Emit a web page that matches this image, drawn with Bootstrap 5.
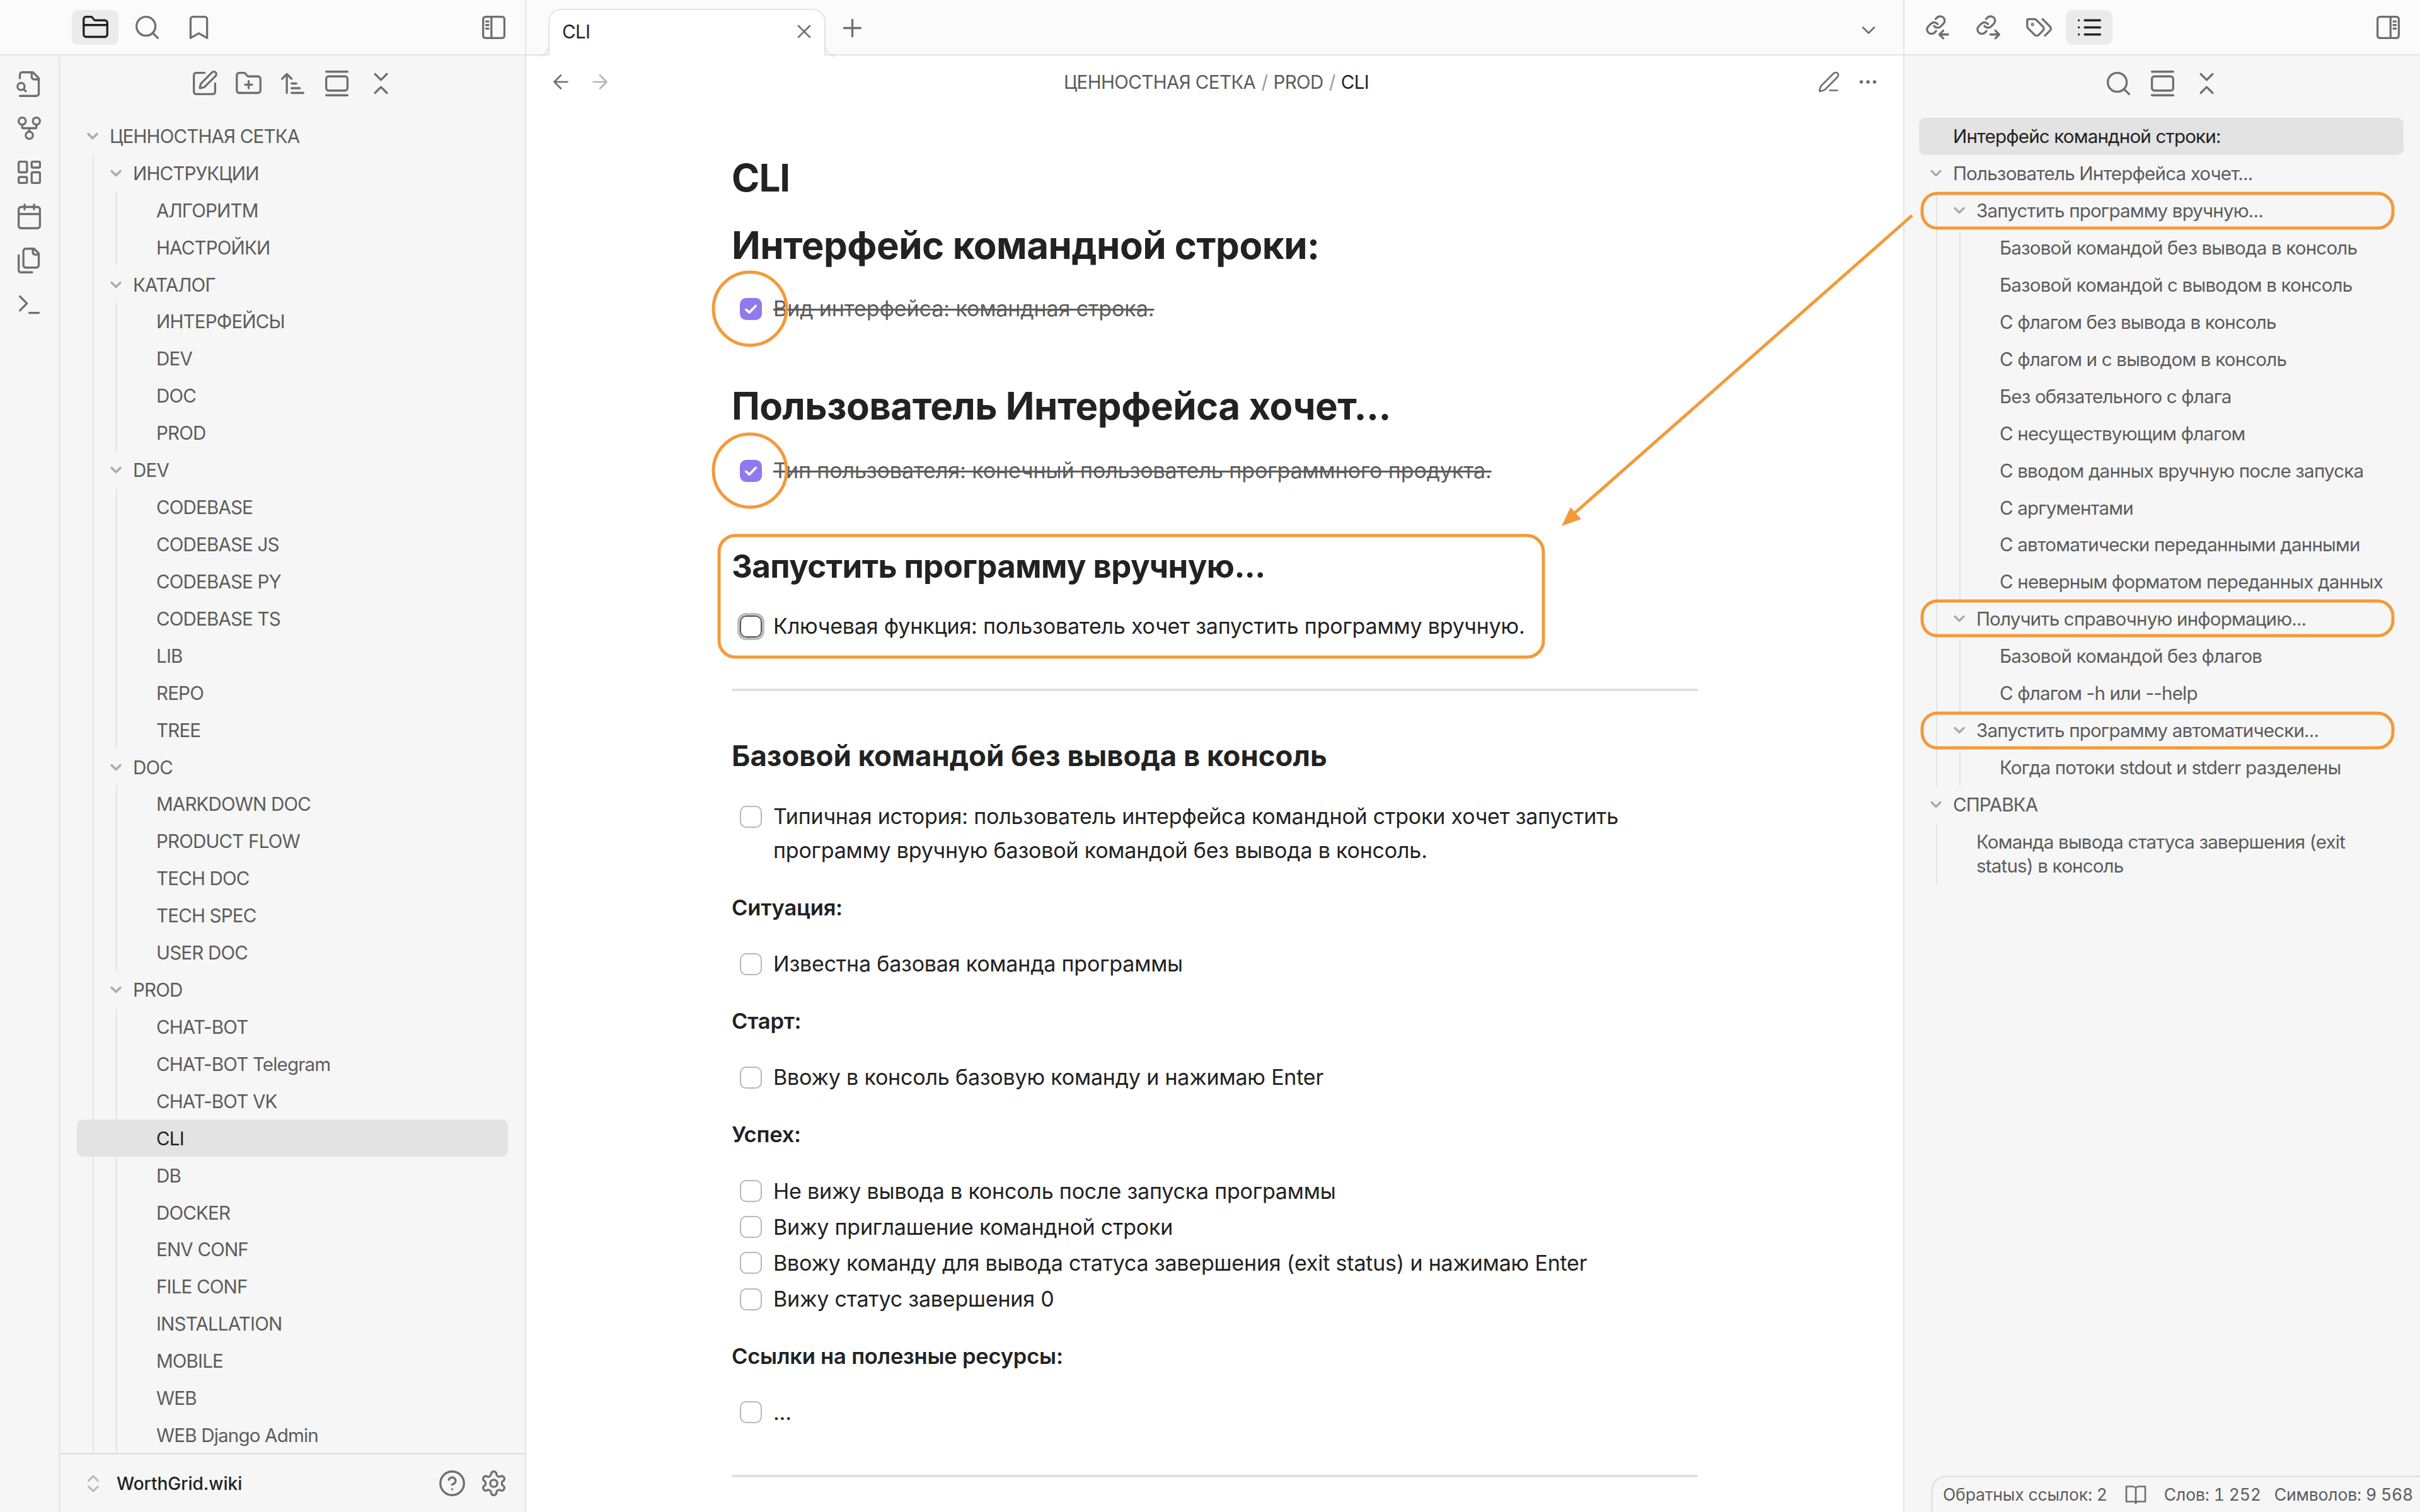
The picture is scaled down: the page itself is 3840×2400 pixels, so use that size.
<!doctype html>
<html lang="ru"><head><meta charset="utf-8"><title>CLI</title>
<link href="https://cdn.jsdelivr.net/npm/bootstrap@5.3.0/dist/css/bootstrap.min.css" rel="stylesheet">
<style>
:root{--line:#e3e3e3;--soft:#f6f6f6;--bar:#fbfbfb;--txt:#5c5c5c;--dark:#222;--ico:#6f6f6f;--org:#f39a38}
html,body{height:2400px;width:3840px;overflow:hidden}
body{font-family:Inter,"Noto Sans",sans-serif;color:var(--dark);background:#fff;position:relative}
svg.ic{fill:none;stroke:currentColor;stroke-width:1.75;stroke-linecap:round;stroke-linejoin:round;display:block}
.i45{width:45px;height:45px}.i36{width:36px;height:36px}.i28{width:28px;height:28px}
.app-left{width:835px;border-right:2px solid var(--line);flex:none}
.pane-body{min-height:0}
.app-main{flex:1 1 0;min-width:0}
.app-right{width:820px;border-left:2px solid var(--line);flex:none;background:var(--soft)}
.topbar{height:88px;background:var(--bar);border-bottom:2px solid var(--line);flex:none}
.top-left{padding:0 13px 0 114px}
.top-right{padding:0 14px 0 0}
.top-group{margin-left:16px;gap:6px}
.tb-btn{width:74px;height:55px;border-radius:10px;color:var(--ico);flex:none}
.tb-btn.on{background:#ebebeb;color:#222}
.ribbon{width:95px;background:var(--soft);border-right:2px solid var(--line);flex:none;padding-top:10px}
.rib-btn{height:70px;color:var(--ico)}
.tree-col{background:var(--soft);min-width:0}
.tool-row{height:88px;flex:none;color:var(--ico)}
.tool-btn{width:70px}
.tree{padding:10.5px 27px 0 25px;font-size:29.5px;letter-spacing:-.8px;color:var(--txt);overflow:hidden;min-height:0}
.ol{padding:11px 26px 0 23px;font-size:29.5px;letter-spacing:-.8px;color:var(--txt)}
.tr{height:58.93px;white-space:nowrap}
.tr-multi{height:auto;white-space:normal;line-height:38px;padding:10px 0}
.chev{width:54px;flex:none;color:#ababab}
.chev svg{stroke-width:3}
.kids{margin-left:27px;border-left:2px solid var(--line);padding-left:8px}
.tr.sel{background:#e3e3e3;color:#222;border-radius:10px}
.tr.deep{margin-left:-72px;padding-left:72px}
.ft{height:94px;border-top:3px solid var(--line);flex:none;padding:0 27px 0 35px}
.ft-name{font-size:28px;font-weight:500;color:#222;margin-left:19px}
.ft-gear{margin-left:21px}
.tabbar{height:88px;background:var(--bar);border-bottom:2px solid var(--line);flex:none;padding-left:35px}
.tabx{width:440px;height:74px;margin-top:14px;background:#fff;border:2px solid var(--line);border-bottom:0;border-radius:20px 20px 0 0;padding:0 14px 4px 20px;font-size:29.5px;letter-spacing:-.6px;color:#222;position:relative}
.tabx::before,.tabx::after{content:"";position:absolute;bottom:-2px;width:14px;height:14px;border-bottom:2px solid var(--line)}
.tabx::before{left:-16px;border-right:2px solid var(--line);border-bottom-right-radius:14px}
.tabx::after{right:-16px;border-left:2px solid var(--line);border-bottom-left-radius:14px}
.tab-plus{margin:22px 0 0 20px}
.tab-menu{margin:30px 37px 0 0}
.ic-g{color:var(--ico)}
.viewhead{height:84px;flex:none;padding:0 38px 0 37px;font-size:29.5px;letter-spacing:-.6px;color:var(--txt)}
.vh-side{width:150px;gap:26px}
.crumbs{padding-left:6px}
.muted-ic{color:#b5b5b5}
.crumb-sep{margin:0 9px;color:#9a9a9a}
.crumb-now{color:#222}
.doc{width:1533px;margin:0 auto;font-size:34px;letter-spacing:-.2px;line-height:54px}
.doc h1,.doc h2,.doc h3,.doc h4{font-weight:700;color:#222;margin-bottom:0}
.d1{font-size:60px;line-height:72px;margin-top:74px!important;letter-spacing:-1px}
.d2{font-size:60px;line-height:72px;letter-spacing:-.5px}
.d3{font-size:51px;line-height:62px;letter-spacing:-.6px}
.d4{font-size:45.5px;line-height:56px;letter-spacing:0}
.lab{font-weight:600;font-size:34.5px;line-height:54px;margin-top:35px}
.rowc{padding:2px 0;gap:18px;padding-left:13px}
.rowc.tight{padding-top:1.6px;padding-bottom:1.6px}
.rowc .form-check-input{width:35px;height:35px;margin:9.5px 0 0;flex:none;border:2.5px solid #b8b8b8;border-radius:10px;background-color:#fff;opacity:1}
.rowc .form-check-input:checked{background-color:#9079ee;border-color:#9079ee;background-size:100%;background-image:url("data:image/svg+xml,%3csvg xmlns='http://www.w3.org/2000/svg' viewBox='0 0 20 20'%3e%3cpath fill='none' stroke='%23fff' stroke-linecap='round' stroke-linejoin='round' stroke-width='2.4' d='M5 10.6l3.4 3L15 6.8'/%3e%3c/svg%3e")}
.rowc .form-check-input.foc{border-color:#555;outline:4px solid #bdbdbd;outline-offset:0}
.done{text-decoration:line-through;text-decoration-thickness:3px;color:var(--txt);letter-spacing:-.1px}
.rule{height:4px;background:#e0e0e0;border:0;opacity:1;margin:0}
.m36{margin-top:36px}.m34{margin-top:34px}.m38{margin-top:38px}.m35{margin-top:35px}.m33{margin-top:33px}.m89{margin-top:89px}.m92{margin-top:92px}.m70{margin-top:70px!important}.m75{margin-top:75px}.m39{margin-top:39px}
.stat{position:absolute;right:0;bottom:0;left:3064px;height:58px;background:var(--soft);border-top:3px solid var(--line);border-left:3px solid var(--line);border-top-left-radius:24px;padding-left:16px;font-size:26.5px;letter-spacing:-.15px;color:var(--txt);gap:21px;white-space:nowrap;font-variant-numeric:tabular-nums}
.stat svg{margin:0 6px}
.overlay{position:absolute;left:0;top:0;width:3840px;height:2400px;pointer-events:none}
</style></head>
<body class="d-flex">
<svg width="0" height="0" class="position-absolute"><defs>
<symbol id="folder" viewBox="0 0 24 24"><path d="M20 20a2 2 0 0 0 2-2V8a2 2 0 0 0-2-2h-7.9a2 2 0 0 1-1.69-.9L9.6 3.9A2 2 0 0 0 7.93 3H4a2 2 0 0 0-2 2v13a2 2 0 0 0 2 2Z"/><path d="M2 10h20"/></symbol>
<symbol id="search" viewBox="0 0 24 24"><circle cx="11" cy="11" r="8"/><path d="m21 21-4.3-4.3"/></symbol>
<symbol id="bookmark" viewBox="0 0 24 24"><path d="m19 21-7-4-7 4V5a2 2 0 0 1 2-2h10a2 2 0 0 1 2 2v16z"/></symbol>
<symbol id="sideL" viewBox="0 0 24 24"><rect x="3" y="3" width="18" height="18" rx="2"/><path d="M10 3v18M5.5 7h2M5.5 10h2M5.5 13h2"/></symbol>
<symbol id="sideR" viewBox="0 0 24 24"><rect x="3" y="3" width="18" height="18" rx="2"/><path d="M14 3v18M16.5 7h2M16.5 10h2M16.5 13h2"/></symbol>
<symbol id="filesearch" viewBox="0 0 24 24"><path d="M4 22h14a2 2 0 0 0 2-2V7l-5-5H6a2 2 0 0 0-2 2v3"/><path d="M14 2v4a2 2 0 0 0 2 2h4"/><path d="M5 17a3 3 0 1 0 0-6 3 3 0 0 0 0 6z"/><path d="m9 18-1.5-1.5"/></symbol>
<symbol id="fork" viewBox="0 0 24 24"><circle cx="12" cy="18" r="3"/><circle cx="6" cy="6" r="3"/><circle cx="18" cy="6" r="3"/><path d="M18 9v2c0 .6-.4 1-1 1H7c-.6 0-1-.4-1-1V9"/><path d="M12 12v3"/></symbol>
<symbol id="dash" viewBox="0 0 24 24"><rect x="3" y="3" width="7" height="9" rx="1"/><rect x="14" y="3" width="7" height="5" rx="1"/><rect x="14" y="12" width="7" height="9" rx="1"/><rect x="3" y="16" width="7" height="5" rx="1"/></symbol>
<symbol id="cal" viewBox="0 0 24 24"><rect x="3" y="4" width="18" height="18" rx="2"/><path d="M16 2v4M8 2v4M3 10h18"/></symbol>
<symbol id="files" viewBox="0 0 24 24"><path d="M20 7h-3a2 2 0 0 1-2-2V2"/><path d="M9 18a2 2 0 0 1-2-2V4a2 2 0 0 1 2-2h7l4 4v10a2 2 0 0 1-2 2Z"/><path d="M3 7.6v12.8A1.6 1.6 0 0 0 4.6 22h9.8"/></symbol>
<symbol id="term" viewBox="0 0 24 24"><path d="m4 17 6-6-6-6M12 19h8"/></symbol>
<symbol id="sqpen" viewBox="0 0 24 24"><path d="M12 3H5a2 2 0 0 0-2 2v14a2 2 0 0 0 2 2h14a2 2 0 0 0 2-2v-7"/><path d="M18.375 2.625a1 1 0 0 1 3 3l-9.013 9.014a2 2 0 0 1-.853.505l-2.873.84a.5.5 0 0 1-.62-.62l.84-2.873a2 2 0 0 1 .506-.852z"/></symbol>
<symbol id="fplus" viewBox="0 0 24 24"><path d="M12 10v6M9 13h6"/><path d="M20 20a2 2 0 0 0 2-2V8a2 2 0 0 0-2-2h-7.9a2 2 0 0 1-1.69-.9L9.6 3.9A2 2 0 0 0 7.93 3H4a2 2 0 0 0-2 2v13a2 2 0 0 0 2 2Z"/></symbol>
<symbol id="sort" viewBox="0 0 24 24"><path d="m3 8 4-4 4 4M7 4v16M11 12h4M11 16h7M11 20h10"/></symbol>
<symbol id="gallery" viewBox="0 0 24 24"><path d="M3 2h18"/><rect x="3" y="6" width="18" height="12" rx="2"/><path d="M3 22h18"/></symbol>
<symbol id="cdu" viewBox="0 0 24 24"><path d="m7 20 5-5 5 5M7 4l5 5 5-5"/></symbol>
<symbol id="cud" viewBox="0 0 24 24"><path d="m7 15 5 5 5-5M7 9l5-5 5 5"/></symbol>
<symbol id="cd" viewBox="0 0 24 24"><path d="m6 9 6 6 6-6"/></symbol>
<symbol id="x" viewBox="0 0 24 24"><path d="M18 6 6 18M6 6l12 12"/></symbol>
<symbol id="plus" viewBox="0 0 24 24"><path d="M5 12h14M12 5v14"/></symbol>
<symbol id="al" viewBox="0 0 24 24"><path d="m12 19-7-7 7-7M19 12H5"/></symbol>
<symbol id="ar" viewBox="0 0 24 24"><path d="M5 12h14M12 5l7 7-7 7"/></symbol>
<symbol id="pen" viewBox="0 0 24 24"><path d="M13 21h8"/><path d="M21.174 6.812a1 1 0 0 0-3.986-3.987L3.842 16.174a2 2 0 0 0-.5.83l-1.321 4.352a.5.5 0 0 0 .623.622l4.353-1.32a2 2 0 0 0 .83-.497z"/></symbol>
<symbol id="more" viewBox="0 0 24 24"><circle cx="12" cy="12" r="1"/><circle cx="19" cy="12" r="1"/><circle cx="5" cy="12" r="1"/></symbol>
<symbol id="lin" viewBox="0 0 24 24"><g transform="translate(1 1) scale(.75)" stroke-width="2.35"><path d="M10 13a5 5 0 0 0 7.54.54l3-3a5 5 0 0 0-7.07-7.07l-1.72 1.71"/><path d="M14 11a5 5 0 0 0-7.54-.54l-3 3a5 5 0 0 0 7.07 7.07l1.71-1.71"/></g><path d="M20.4 18H13m3.3-3.3L13 18l3.3 3.3"/></symbol>
<symbol id="lout" viewBox="0 0 24 24"><g transform="translate(1 1) scale(.75)" stroke-width="2.35"><path d="M10 13a5 5 0 0 0 7.54.54l3-3a5 5 0 0 0-7.07-7.07l-1.72 1.71"/><path d="M14 11a5 5 0 0 0-7.54-.54l-3 3a5 5 0 0 0 7.07 7.07l1.71-1.71"/></g><path d="M13.5 18H21m-3.3-3.3L21 18l-3.3 3.3"/></symbol>
<symbol id="tags" viewBox="0 0 24 24"><path d="m15 5 6.3 6.3a2.4 2.4 0 0 1 0 3.4L17 19"/><path d="M9.586 5.586A2 2 0 0 0 8.172 5H3a1 1 0 0 0-1 1v5.172a2 2 0 0 0 .588 1.414L8.29 18.29a2.426 2.426 0 0 0 3.42 0l3.58-3.58a2.426 2.426 0 0 0 0-3.42z"/><circle cx="6.5" cy="9.5" r=".5"/></symbol>
<symbol id="list" viewBox="0 0 24 24"><path d="M3 12h.01M3 18h.01M3 6h.01M8 12h13M8 18h13M8 6h13"/></symbol>
<symbol id="help" viewBox="0 0 24 24"><circle cx="12" cy="12" r="10"/><path d="M9.09 9a3 3 0 0 1 5.83 1c0 2-3 3-3 3M12 17h.01"/></symbol>
<symbol id="gear" viewBox="0 0 24 24"><path d="M12.22 2h-.44a2 2 0 0 0-2 2v.18a2 2 0 0 1-1 1.73l-.43.25a2 2 0 0 1-2 0l-.15-.08a2 2 0 0 0-2.73.73l-.22.38a2 2 0 0 0 .73 2.73l.15.1a2 2 0 0 1 1 1.72v.51a2 2 0 0 1-1 1.74l-.15.09a2 2 0 0 0-.73 2.73l.22.38a2 2 0 0 0 2.73.73l.15-.08a2 2 0 0 1 2 0l.43.25a2 2 0 0 1 1 1.73V20a2 2 0 0 0 2 2h.44a2 2 0 0 0 2-2v-.18a2 2 0 0 1 1-1.73l.43-.25a2 2 0 0 1 2 0l.15.08a2 2 0 0 0 2.73-.73l.22-.39a2 2 0 0 0-.73-2.73l-.15-.08a2 2 0 0 1-1-1.74v-.5a2 2 0 0 1 1-1.74l.15-.09a2 2 0 0 0 .73-2.73l-.22-.38a2 2 0 0 0-2.73-.73l-.15.08a2 2 0 0 1-2 0l-.43-.25a2 2 0 0 1-1-1.73V4a2 2 0 0 0-2-2z"/><circle cx="12" cy="12" r="3"/></symbol>
<symbol id="book" viewBox="0 0 24 24"><path d="M2 3h7a3 3 0 0 1 3 3v15a2 2 0 0 0-2-2H2zM22 3h-7a3 3 0 0 0-3 3v15a2 2 0 0 1 2-2h8z"/></symbol>
</defs></svg>

<aside class="app-left d-flex flex-column">
  <div class="topbar top-left d-flex align-items-center gap-2">
    <div class="tb-btn on d-flex align-items-center justify-content-center"><svg class="ic i45"><use href="#folder"/></svg></div>
    <div class="tb-btn d-flex align-items-center justify-content-center"><svg class="ic i45"><use href="#search"/></svg></div>
    <div class="tb-btn d-flex align-items-center justify-content-center"><svg class="ic i45"><use href="#bookmark"/></svg></div>
    <div class="tb-btn d-flex align-items-center justify-content-center ms-auto"><svg class="ic i45"><use href="#sideL"/></svg></div>
  </div>
  <div class="pane-body d-flex flex-fill">
    <nav class="ribbon d-flex flex-column">
      <div class="rib-btn d-flex align-items-center justify-content-center"><svg class="ic i45"><use href="#filesearch"/></svg></div>
      <div class="rib-btn d-flex align-items-center justify-content-center"><svg class="ic i45"><use href="#fork"/></svg></div>
      <div class="rib-btn d-flex align-items-center justify-content-center"><svg class="ic i45"><use href="#dash"/></svg></div>
      <div class="rib-btn d-flex align-items-center justify-content-center"><svg class="ic i45"><use href="#cal"/></svg></div>
      <div class="rib-btn d-flex align-items-center justify-content-center"><svg class="ic i45"><use href="#files"/></svg></div>
      <div class="rib-btn d-flex align-items-center justify-content-center"><svg class="ic i45"><use href="#term"/></svg></div>
    </nav>
    <div class="tree-col flex-fill d-flex flex-column">
      <div class="tool-row d-flex align-items-center justify-content-center">
        <div class="tool-btn d-flex justify-content-center"><svg class="ic i45"><use href="#sqpen"/></svg></div>
        <div class="tool-btn d-flex justify-content-center"><svg class="ic i45"><use href="#fplus"/></svg></div>
        <div class="tool-btn d-flex justify-content-center"><svg class="ic i45"><use href="#sort"/></svg></div>
        <div class="tool-btn d-flex justify-content-center"><svg class="ic i45"><use href="#gallery"/></svg></div>
        <div class="tool-btn d-flex justify-content-center"><svg class="ic i45"><use href="#cdu"/></svg></div>
      </div>
      <div class="tree flex-fill">
        <div class="tr d-flex align-items-center"><span class="chev d-flex justify-content-center"><svg class="ic i28"><use href="#cd"/></svg></span>ЦЕННОСТНАЯ СЕТКА</div>
        <div class="kids">
          <div class="tr d-flex align-items-center"><span class="chev d-flex justify-content-center"><svg class="ic i28"><use href="#cd"/></svg></span>ИНСТРУКЦИИ</div>
          <div class="kids">
            <div class="tr d-flex align-items-center"><span class="chev"></span>АЛГОРИТМ</div>
            <div class="tr d-flex align-items-center"><span class="chev"></span>НАСТРОЙКИ</div>
          </div>
          <div class="tr d-flex align-items-center"><span class="chev d-flex justify-content-center"><svg class="ic i28"><use href="#cd"/></svg></span>КАТАЛОГ</div>
          <div class="kids">
            <div class="tr d-flex align-items-center"><span class="chev"></span>ИНТЕРФЕЙСЫ</div>
            <div class="tr d-flex align-items-center"><span class="chev"></span>DEV</div>
            <div class="tr d-flex align-items-center"><span class="chev"></span>DOC</div>
            <div class="tr d-flex align-items-center"><span class="chev"></span>PROD</div>
          </div>
          <div class="tr d-flex align-items-center"><span class="chev d-flex justify-content-center"><svg class="ic i28"><use href="#cd"/></svg></span>DEV</div>
          <div class="kids">
            <div class="tr d-flex align-items-center"><span class="chev"></span>CODEBASE</div>
            <div class="tr d-flex align-items-center"><span class="chev"></span>CODEBASE JS</div>
            <div class="tr d-flex align-items-center"><span class="chev"></span>CODEBASE PY</div>
            <div class="tr d-flex align-items-center"><span class="chev"></span>CODEBASE TS</div>
            <div class="tr d-flex align-items-center"><span class="chev"></span>LIB</div>
            <div class="tr d-flex align-items-center"><span class="chev"></span>REPO</div>
            <div class="tr d-flex align-items-center"><span class="chev"></span>TREE</div>
          </div>
          <div class="tr d-flex align-items-center"><span class="chev d-flex justify-content-center"><svg class="ic i28"><use href="#cd"/></svg></span>DOC</div>
          <div class="kids">
            <div class="tr d-flex align-items-center"><span class="chev"></span>MARKDOWN DOC</div>
            <div class="tr d-flex align-items-center"><span class="chev"></span>PRODUCT FLOW</div>
            <div class="tr d-flex align-items-center"><span class="chev"></span>TECH DOC</div>
            <div class="tr d-flex align-items-center"><span class="chev"></span>TECH SPEC</div>
            <div class="tr d-flex align-items-center"><span class="chev"></span>USER DOC</div>
          </div>
          <div class="tr d-flex align-items-center"><span class="chev d-flex justify-content-center"><svg class="ic i28"><use href="#cd"/></svg></span>PROD</div>
          <div class="kids">
            <div class="tr d-flex align-items-center"><span class="chev"></span>CHAT-BOT</div>
            <div class="tr d-flex align-items-center"><span class="chev"></span>CHAT-BOT Telegram</div>
            <div class="tr d-flex align-items-center"><span class="chev"></span>CHAT-BOT VK</div>
            <div class="tr sel deep d-flex align-items-center"><span class="chev"></span>CLI</div>
            <div class="tr d-flex align-items-center"><span class="chev"></span>DB</div>
            <div class="tr d-flex align-items-center"><span class="chev"></span>DOCKER</div>
            <div class="tr d-flex align-items-center"><span class="chev"></span>ENV CONF</div>
            <div class="tr d-flex align-items-center"><span class="chev"></span>FILE CONF</div>
            <div class="tr d-flex align-items-center"><span class="chev"></span>INSTALLATION</div>
            <div class="tr d-flex align-items-center"><span class="chev"></span>MOBILE</div>
            <div class="tr d-flex align-items-center"><span class="chev"></span>WEB</div>
            <div class="tr d-flex align-items-center"><span class="chev"></span>WEB Django Admin</div>
          </div>
        </div>
      </div>
      <div class="ft d-flex align-items-center">
        <svg class="ic i36 muted-ic"><use href="#cud"/></svg>
        <span class="ft-name">WorthGrid.wiki</span>
        <svg class="ic i45 ic-g ms-auto"><use href="#help"/></svg>
        <svg class="ic i45 ic-g ft-gear"><use href="#gear"/></svg>
      </div>
    </div>
  </div>
</aside>

<main class="app-main d-flex flex-column">
  <div class="tabbar d-flex align-items-start">
    <div class="tabx d-flex align-items-center justify-content-between"><span>CLI</span><svg class="ic i36 ic-g"><use href="#x"/></svg></div>
    <svg class="ic i45 ic-g tab-plus"><use href="#plus"/></svg>
    <svg class="ic i36 ic-g ms-auto tab-menu"><use href="#cd"/></svg>
  </div>
  <div class="viewhead d-flex align-items-center">
    <div class="vh-side d-flex"><svg class="ic i36 ic-g"><use href="#al"/></svg><svg class="ic i36 muted-ic"><use href="#ar"/></svg></div>
    <div class="crumbs flex-fill text-center text-nowrap">ЦЕННОСТНАЯ СЕТКА<span class="crumb-sep">/</span>PROD<span class="crumb-sep">/</span><span class="crumb-now">CLI</span></div>
    <div class="vh-side d-flex justify-content-end"><svg class="ic i36 ic-g"><use href="#pen"/></svg><svg class="ic i36 ic-g"><use href="#more"/></svg></div>
  </div>
  <article class="doc">
    <h1 class="d1">CLI</h1>
    <h2 class="d2 m35">Интерфейс командной строки:</h2>
    <div class="rowc d-flex m36"><input class="form-check-input" type="checkbox" checked><span class="done">Вид интерфейса: командная строка.</span></div>
    <h2 class="d2 m89">Пользователь Интерфейса хочет...</h2>
    <div class="rowc d-flex m38"><input class="form-check-input" type="checkbox" checked><span class="done">Тип пользователя: конечный пользователь программного продукта.</span></div>
    <h3 class="d3 m92">Запустить программу вручную...</h3>
    <div class="rowc d-flex m35"><input class="form-check-input foc" type="checkbox"><span>Ключевая функция: пользователь хочет запустить программу вручную.</span></div>
    <hr class="rule m70">
    <h4 class="d4 m75">Базовой командой без вывода в консоль</h4>
    <div class="rowc d-flex m39"><input class="form-check-input" type="checkbox"><span>Типичная история: пользователь интерфейса командной строки хочет запустить программу вручную базовой командой без вывода в консоль.</span></div>
    <div class="lab">Ситуация:</div>
    <div class="rowc d-flex m33"><input class="form-check-input" type="checkbox"><span>Известна базовая команда программы</span></div>
    <div class="lab">Старт:</div>
    <div class="rowc d-flex m33"><input class="form-check-input" type="checkbox"><span>Ввожу в консоль базовую команду и нажимаю Enter</span></div>
    <div class="lab">Успех:</div>
    <div class="rowc tight d-flex m34"><input class="form-check-input" type="checkbox"><span>Не вижу вывода в консоль после запуска программы</span></div>
    <div class="rowc tight d-flex"><input class="form-check-input" type="checkbox"><span>Вижу приглашение командной строки</span></div>
    <div class="rowc tight d-flex"><input class="form-check-input" type="checkbox"><span>Ввожу команду для вывода статуса завершения (exit status) и нажимаю Enter</span></div>
    <div class="rowc tight d-flex"><input class="form-check-input" type="checkbox"><span>Вижу статус завершения 0</span></div>
    <div class="lab">Ссылки на полезные ресурсы:</div>
    <div class="rowc d-flex m33"><input class="form-check-input" type="checkbox"><span>...</span></div>
    <hr class="rule m70">
  </article>
</main>

<aside class="app-right d-flex flex-column">
  <div class="topbar top-right d-flex align-items-center">
    <div class="top-group d-flex">
      <div class="tb-btn d-flex align-items-center justify-content-center"><svg class="ic i45"><use href="#lin"/></svg></div>
      <div class="tb-btn d-flex align-items-center justify-content-center"><svg class="ic i45"><use href="#lout"/></svg></div>
      <div class="tb-btn d-flex align-items-center justify-content-center"><svg class="ic i45"><use href="#tags"/></svg></div>
      <div class="tb-btn on d-flex align-items-center justify-content-center"><svg class="ic i45"><use href="#list"/></svg></div>
    </div>
    <div class="tb-btn d-flex align-items-center justify-content-center ms-auto"><svg class="ic i45"><use href="#sideR"/></svg></div>
  </div>
  <div class="tool-row d-flex align-items-center justify-content-center">
    <div class="tool-btn d-flex justify-content-center"><svg class="ic i45"><use href="#search"/></svg></div>
    <div class="tool-btn d-flex justify-content-center"><svg class="ic i45"><use href="#gallery"/></svg></div>
    <div class="tool-btn d-flex justify-content-center"><svg class="ic i45"><use href="#cdu"/></svg></div>
  </div>
  <div class="ol">
    <div class="tr sel d-flex align-items-center"><span class="chev"></span>Интерфейс командной строки:</div>
    <div class="tr d-flex align-items-center"><span class="chev d-flex justify-content-center"><svg class="ic i28"><use href="#cd"/></svg></span>Пользователь Интерфейса хочет...</div>
    <div class="kids">
      <div class="tr d-flex align-items-center"><span class="chev d-flex justify-content-center"><svg class="ic i28"><use href="#cd"/></svg></span>Запустить программу вручную...</div>
      <div class="kids">
        <div class="tr d-flex align-items-center"><span class="chev"></span>Базовой командой без вывода в консоль</div>
        <div class="tr d-flex align-items-center"><span class="chev"></span>Базовой командой с выводом в консоль</div>
        <div class="tr d-flex align-items-center"><span class="chev"></span>С флагом без вывода в консоль</div>
        <div class="tr d-flex align-items-center"><span class="chev"></span>С флагом и с выводом в консоль</div>
        <div class="tr d-flex align-items-center"><span class="chev"></span>Без обязательного с флага</div>
        <div class="tr d-flex align-items-center"><span class="chev"></span>С несуществующим флагом</div>
        <div class="tr d-flex align-items-center"><span class="chev"></span>С вводом данных вручную после запуска</div>
        <div class="tr d-flex align-items-center"><span class="chev"></span>С аргументами</div>
        <div class="tr d-flex align-items-center"><span class="chev"></span>С автоматически переданными данными</div>
        <div class="tr d-flex align-items-center"><span class="chev"></span>С неверным форматом переданных данных</div>
      </div>
      <div class="tr d-flex align-items-center"><span class="chev d-flex justify-content-center"><svg class="ic i28"><use href="#cd"/></svg></span>Получить справочную информацию...</div>
      <div class="kids">
        <div class="tr d-flex align-items-center"><span class="chev"></span>Базовой командой без флагов</div>
        <div class="tr d-flex align-items-center"><span class="chev"></span>С флагом -h или --help</div>
      </div>
      <div class="tr d-flex align-items-center"><span class="chev d-flex justify-content-center"><svg class="ic i28"><use href="#cd"/></svg></span>Запустить программу автоматически...</div>
      <div class="kids">
        <div class="tr d-flex align-items-center"><span class="chev"></span>Когда потоки stdout и stderr разделены</div>
      </div>
    </div>
    <div class="tr d-flex align-items-center"><span class="chev d-flex justify-content-center"><svg class="ic i28"><use href="#cd"/></svg></span>СПРАВКА</div>
    <div class="kids">
      <div class="tr tr-multi d-flex"><span class="chev"></span><span>Команда вывода статуса завершения (exit status) в консоль</span></div>
    </div>
  </div>
</aside>

<div class="stat d-flex align-items-center">
  <span>Обратных ссылок: 2</span>
  <svg class="ic i36 ic-g"><use href="#book"/></svg>
  <span>Слов: 1 252</span>
  <span>Символов: 9 568</span>
</div>

<svg class="overlay" viewBox="0 0 3840 2400" fill="none" stroke="#f39a38" stroke-width="5">
  <circle cx="1190" cy="490" r="58"/>
  <circle cx="1190" cy="747" r="58"/>
  <rect x="1141" y="850" width="1308" height="193" rx="26"/>
  <rect x="3050" y="307" width="747" height="55" rx="24"/>
  <rect x="3050" y="954" width="747" height="55" rx="24"/>
  <rect x="3050" y="1132" width="747" height="55" rx="24"/>
  <path d="M3034 342 2490 822"/>
  <path d="M2478 835l14-30 17 19z" fill="#f39a38" stroke="none"/>
</svg>
</body></html>
